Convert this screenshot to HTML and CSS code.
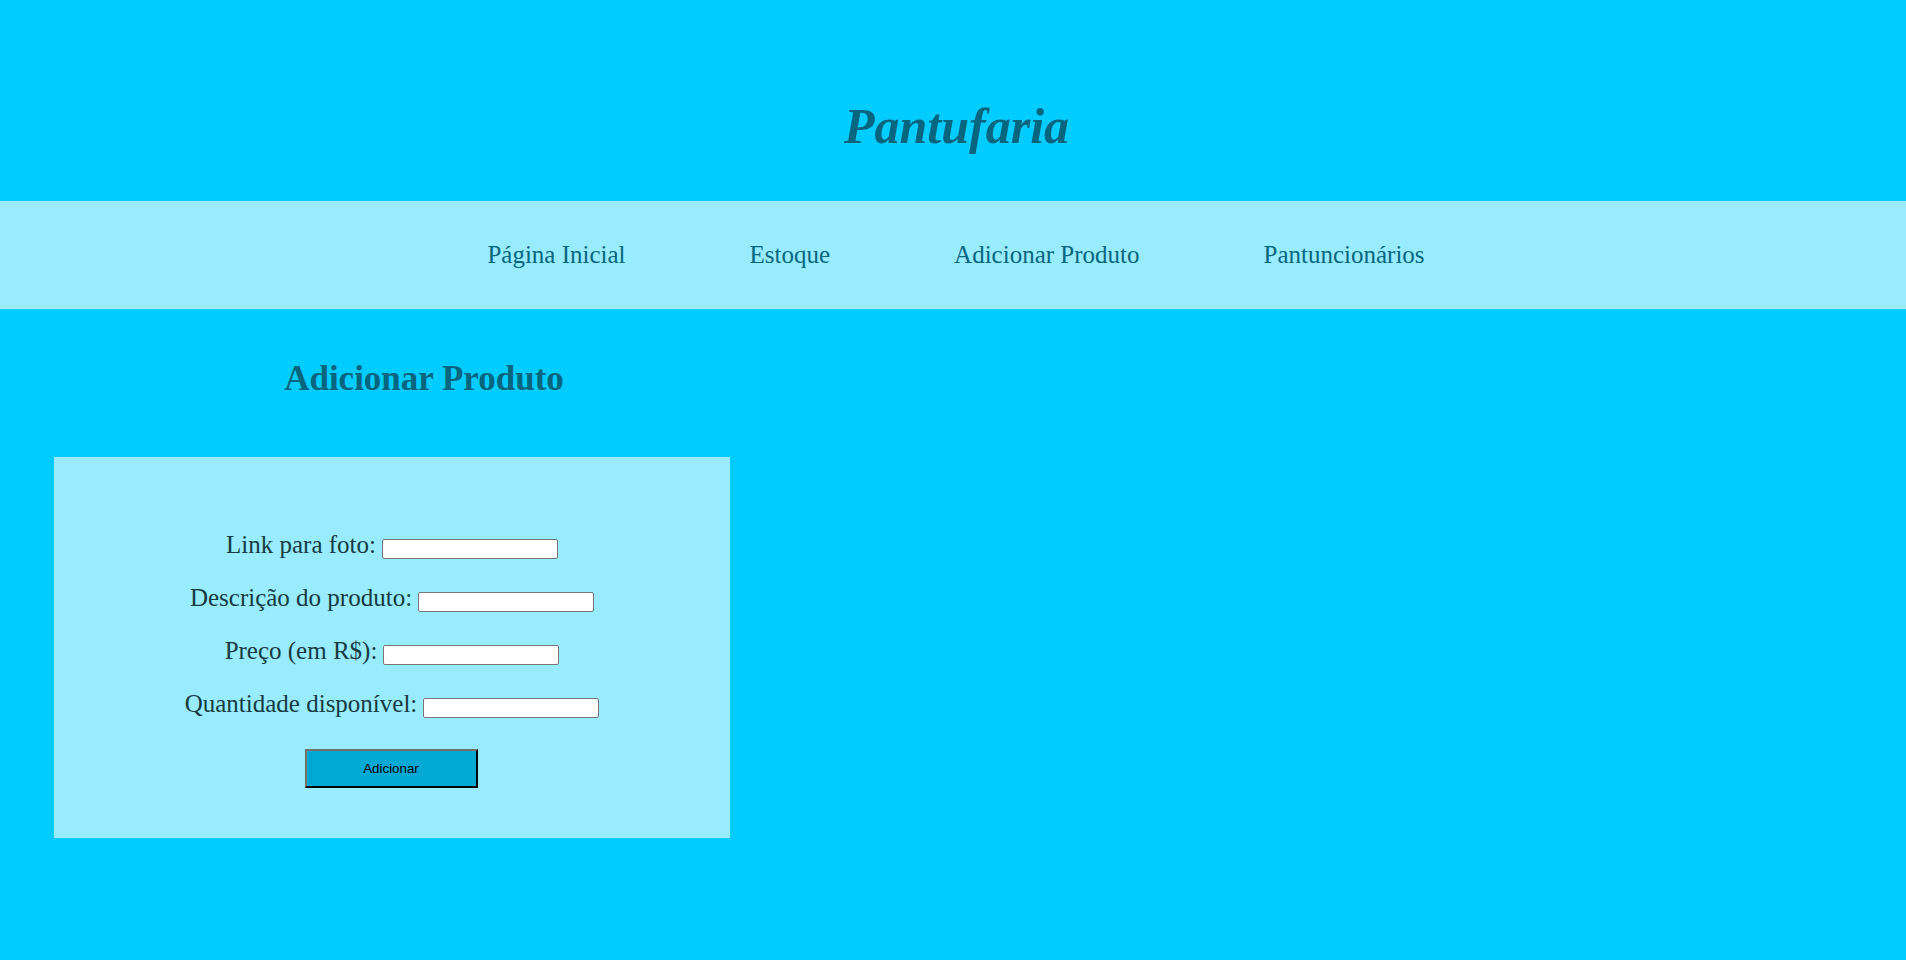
FILE: index.html
```html
<!DOCTYPE html>
<html lang="pt-BR">
<head>
<meta charset="utf-8">
<title>Pantufaria - Adicionar Produto</title>
<link rel="stylesheet" href="styles.css">
</head>
<body>
<header class="site-header">
  <h1 class="brand">Pantufaria</h1>
</header>
<nav class="main-nav">
  <a href="#" class="nav-link">Página Inicial</a>
  <a href="#" class="nav-link">Estoque</a>
  <a href="#" class="nav-link">Adicionar Produto</a>
  <a href="#" class="nav-link">Pantuncionários</a>
</nav>
<main class="content">
  <h2 class="page-title">Adicionar Produto</h2>
  <form class="product-form">
    <div class="form-row"><label class="form-label">Link para foto:</label><input class="form-input" type="text"></div>
    <div class="form-row"><label class="form-label">Descrição do produto:</label><input class="form-input" type="text"></div>
    <div class="form-row"><label class="form-label">Preço (em R$):</label><input class="form-input" type="text"></div>
    <div class="form-row"><label class="form-label">Quantidade disponível:</label><input class="form-input" type="text"></div>
    <div class="form-actions"><button type="button" class="submit-btn">Adicionar</button></div>
  </form>
</main>
</body>
</html>
```
FILE: styles.css
```css
html, body {
  margin: 0;
  padding: 0;
}
body {
  background: #00ccff;
  font-family: "Liberation Serif", "Times New Roman", serif;
  min-height: 960px;
}
.site-header {
  background: #00ccff;
  padding: 101px 0 50px 7px;
  text-align: center;
}
.brand {
  margin: 0;
  font-size: 50px;
  line-height: 50px;
  font-style: italic;
  font-weight: bold;
  color: #04657e;
}
.main-nav {
  background: #99ebff;
  display: flex;
  justify-content: center;
  gap: 124px;
  padding: 41px 0 42px 6px;
}
.nav-link {
  font-size: 25px;
  line-height: 25px;
  color: #05677f;
  text-decoration: none;
}
.content {
  padding-top: 52px;
}
.page-title {
  width: 848px;
  margin: 0;
  text-align: center;
  font-size: 35px;
  line-height: 35px;
  font-weight: bold;
  color: #04657e;
}
.product-form {
  margin: 61px 0 0 54px;
  width: 676px;
  height: 381px;
  box-sizing: border-box;
  background: #99ebff;
  padding-top: 75px;
  display: flex;
  flex-direction: column;
  gap: 28px;
}
.form-row {
  display: flex;
  justify-content: center;
  align-items: center;
  gap: 6px;
  height: 25px;
}
.form-label {
  font-size: 25px;
  line-height: 25px;
  color: #163b41;
}
.form-input {
  width: 176px;
  height: 20px;
  box-sizing: border-box;
  margin: 9px 0 0 0;
  border: 1px solid #767676;
  border-radius: 2px;
  background: #ffffff;
  padding: 1px 2px;
  font-family: "Liberation Sans", Arial, sans-serif;
  font-size: 13.333px;
}
.form-actions {
  display: flex;
  justify-content: center;
  margin-top: 5px;
  padding-right: 2px;
}
.submit-btn {
  width: 173px;
  height: 39px;
  box-sizing: border-box;
  background: #00a9d3;
  border: 2px outset #6e6e6e;
  border-color: #707070 #202020 #202020 #707070;
  font-family: "Liberation Sans", Arial, sans-serif;
  font-size: 13.333px;
  color: #000000;
  padding: 0;
}
```
